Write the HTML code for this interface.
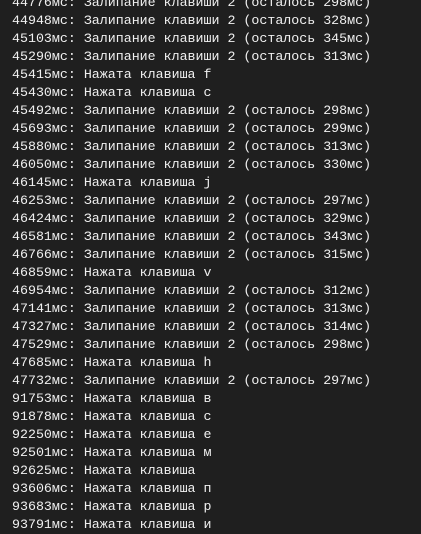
<!DOCTYPE html>
<html><head><meta charset="utf-8"><style>
html,body{margin:0;padding:0;background:#1f1f1f;width:421px;height:524px;overflow:hidden}
pre{margin:0;position:absolute;left:12px;top:-6px;font-family:"Liberation Mono","DejaVu Sans Mono",monospace;font-size:13.3px;line-height:18px;color:#f0f0f0}
</style></head><body><pre>44776мс: Залипание клавиши 2 (осталось 298мс)
44948мс: Залипание клавиши 2 (осталось 328мс)
45103мс: Залипание клавиши 2 (осталось 345мс)
45290мс: Залипание клавиши 2 (осталось 313мс)
45415мс: Нажата клавиша f
45430мс: Нажата клавиша c
45492мс: Залипание клавиши 2 (осталось 298мс)
45693мс: Залипание клавиши 2 (осталось 299мс)
45880мс: Залипание клавиши 2 (осталось 313мс)
46050мс: Залипание клавиши 2 (осталось 330мс)
46145мс: Нажата клавиша j
46253мс: Залипание клавиши 2 (осталось 297мс)
46424мс: Залипание клавиши 2 (осталось 329мс)
46581мс: Залипание клавиши 2 (осталось 343мс)
46766мс: Залипание клавиши 2 (осталось 315мс)
46859мс: Нажата клавиша v
46954мс: Залипание клавиши 2 (осталось 312мс)
47141мс: Залипание клавиши 2 (осталось 313мс)
47327мс: Залипание клавиши 2 (осталось 314мс)
47529мс: Залипание клавиши 2 (осталось 298мс)
47685мс: Нажата клавиша h
47732мс: Залипание клавиши 2 (осталось 297мс)
91753мс: Нажата клавиша в
91878мс: Нажата клавиша с
92250мс: Нажата клавиша е
92501мс: Нажата клавиша м
92625мс: Нажата клавиша
93606мс: Нажата клавиша п
93683мс: Нажата клавиша р
93791мс: Нажата клавиша и</pre></body></html>
